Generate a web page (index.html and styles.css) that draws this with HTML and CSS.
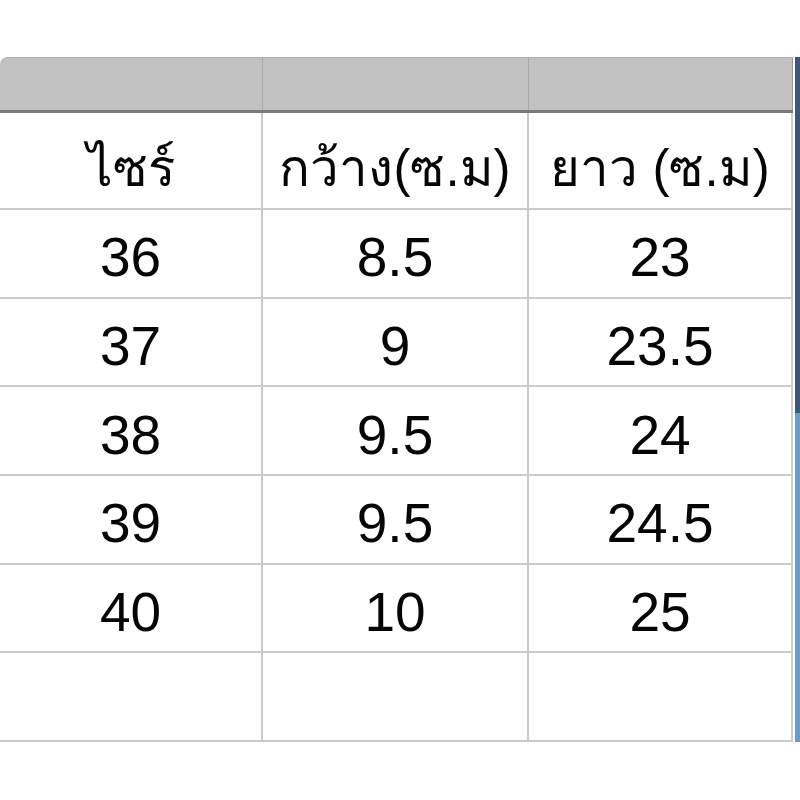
FILE: index.html
```html
<!DOCTYPE html>
<html lang="th">
<head>
<meta charset="utf-8">
<link rel="stylesheet" href="styles.css">
</head>
<body>
<div class="sheet">
  <div class="table">
    <div class="hdr"><div class="hcell"></div><div class="hcell"></div><div class="hcell last"></div></div>
    <div class="row head"><div class="cell">ไซร์</div><div class="cell">กว้าง(ซ.ม)</div><div class="cell last">ยาว (ซ.ม)</div></div>
    <div class="row"><div class="cell">36</div><div class="cell">8.5</div><div class="cell last">23</div></div>
    <div class="row"><div class="cell">37</div><div class="cell">9</div><div class="cell last">23.5</div></div>
    <div class="row"><div class="cell">38</div><div class="cell">9.5</div><div class="cell last">24</div></div>
    <div class="row"><div class="cell">39</div><div class="cell">9.5</div><div class="cell last">24.5</div></div>
    <div class="row"><div class="cell">40</div><div class="cell">10</div><div class="cell last">25</div></div>
    <div class="row"><div class="cell"></div><div class="cell"></div><div class="cell last"></div></div>
  </div>
  <div class="scroll"><div class="thumb"></div><div class="track"></div></div>
</div>
</body>
</html>
```
FILE: styles.css
```css
html, body { margin: 0; padding: 0; background: #fff; }
body { font-family: "Liberation Sans", Arial, "Noto Sans", sans-serif; color: #050505; }
.sheet { display: flex; padding-top: 57px; width: 800px; }
.table { width: 793px; display: flex; flex-direction: column; }
.hdr { display: grid; grid-template-columns: 263px 266px 264px; height: 52px; background: #c2c2c3; border-top: 1px solid #b0b0b0; border-bottom: 3px solid #7a7a7a; border-top-left-radius: 8px; }
.hcell { border-right: 1px solid #a9a9aa; }
.hcell.last { border-right: 1px solid #9a9a9a; }
.row { display: grid; grid-template-columns: 263px 266px 264px; height: 88.7px; border-bottom: 2px solid #cbcbcb; box-sizing: border-box; }
.row.head { height: 97px; }
.cell { border-right: 2px solid #c9c9c9; display: flex; align-items: center; justify-content: center; font-size: 55px; padding-top: 8px; box-sizing: border-box; }
.row.head .cell { font-size: 51px; padding-top: 14px; }
.cell.last { border-right: 2px solid #d0d0d0; }
.scroll { width: 5px; margin-left: 2px; display: flex; flex-direction: column; height: 685px; }
.thumb { height: 356px; background: #3e5878; }
.track { flex: 1; background: #6d9cc9; }
```
